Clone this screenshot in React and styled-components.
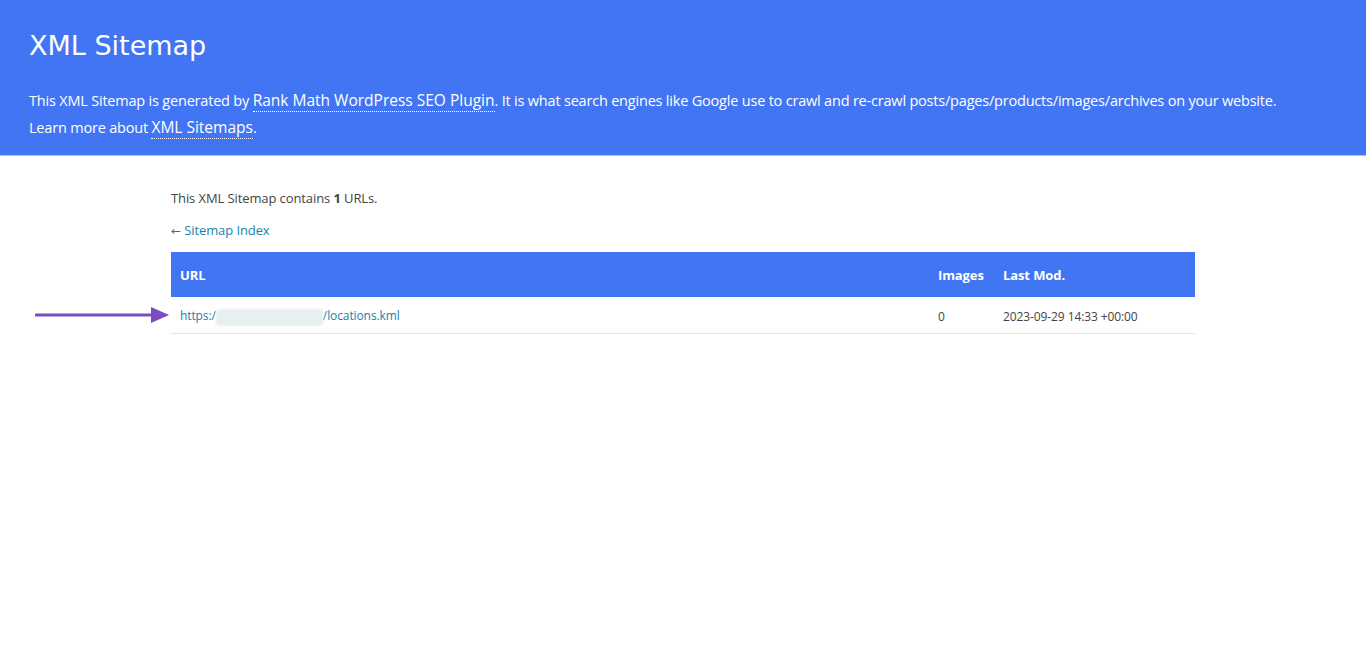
import React from "react";
import styled, { createGlobalStyle } from "styled-components";

const GlobalStyle = createGlobalStyle`
  html, body {
    margin: 0;
    padding: 0;
    background: #fff;
  }
  body {
    font-family: "Open Sans", "Noto Sans", sans-serif;
    font-size: 13px;
    color: #444;
  }
`;

const Header = styled.header`
  background: #4275f4;
  border-bottom: 1px solid #a9c2fa;
  padding: 29px 29px 14px;
  color: #fff;
`;

const Title = styled.h1`
  margin: 0 0 24px;
  font-family: "DejaVu Sans", Verdana, sans-serif;
  font-size: 27px;
  font-weight: 400;
  line-height: 34px;
`;

const Intro = styled.p`
  margin: 0;
  font-size: 14.5px;
  line-height: 27px;
  letter-spacing: -0.2px;
`;

const HeaderLink = styled.a`
  color: #fff;
  text-decoration: none;
  border-bottom: 1px dotted #fff;
  font-size: 15.5px;
  letter-spacing: 0;
`;

const Content = styled.main`
  width: 1024px;
  margin: 0 auto;
  padding-top: 33px;
`;

const Note = styled.p`
  margin: 0 0 14px;
  line-height: 18px;
  letter-spacing: -0.1px;
`;

const BackLink = styled.a`
  display: inline-block;
  color: #1a7fab;
  text-decoration: none;
  line-height: 18px;
  margin-bottom: 12px;
  letter-spacing: -0.1px;
`;

const ArrowGlyph = styled.span`
  font-family: "DejaVu Sans", sans-serif;
  font-size: 12px;
`;

const Table = styled.table`
  width: 100%;
  border-collapse: collapse;
  font-size: 12px;
  color: #444;
  letter-spacing: -0.1px;
`;

const Th = styled.th`
  background: #4275f4;
  color: #fff;
  text-align: left;
  font-size: 13px;
  font-weight: 700;
  height: 45px;
  padding: 0 9px;
  width: ${(p) => p.$width || "auto"};
`;

const Td = styled.td`
  height: 33px;
  padding: 3px 9px 0;
  border-bottom: 1px solid #e5e5e5;
`;

const UrlCell = styled(Td)`
  position: relative;
`;

const RowLink = styled.a`
  color: #1a7fab;
  text-decoration: none;
`;

const Blur = styled.span`
  display: inline-block;
  vertical-align: middle;
  width: 107px;
  height: 17px;
  background: #e8eff1;
  border-radius: 3px;
  filter: blur(1px);
`;

const Arrow = styled.svg`
  position: absolute;
  left: -136px;
  top: 8px;
`;

export default function App() {
  return (
    <>
      <GlobalStyle />
      <Header>
        <Title>XML Sitemap</Title>
        <Intro>
          This XML Sitemap is generated by{" "}
          <HeaderLink href="#">Rank Math WordPress SEO Plugin</HeaderLink>. It is what search engines like Google
          use to crawl and re-crawl posts/pages/products/images/archives on your website.
          <br />
          Learn more about <HeaderLink href="#">XML Sitemaps</HeaderLink>.
        </Intro>
      </Header>
      <Content>
        <Note>
          This XML Sitemap contains <strong>1</strong> URLs.
        </Note>
        <BackLink href="#">
          <ArrowGlyph>←</ArrowGlyph> Sitemap Index
        </BackLink>
        <Table>
          <thead>
            <tr>
              <Th>URL</Th>
              <Th $width="47px">Images</Th>
              <Th $width="183px">Last Mod.</Th>
            </tr>
          </thead>
          <tbody>
            <tr>
              <UrlCell>
                <Arrow width="136" height="20" viewBox="0 0 136 20">
                  <line x1="1" y1="10" x2="118" y2="10" stroke="#7b4cc0" strokeWidth="3" strokeLinecap="round" />
                  <polygon points="116,2 134,10 116,18" fill="#7b4cc0" />
                </Arrow>
                <RowLink href="#">
                  https:/<Blur />/locations.kml
                </RowLink>
              </UrlCell>
              <Td>0</Td>
              <Td>2023-09-29 14:33 +00:00</Td>
            </tr>
          </tbody>
        </Table>
      </Content>
    </>
  );
}
